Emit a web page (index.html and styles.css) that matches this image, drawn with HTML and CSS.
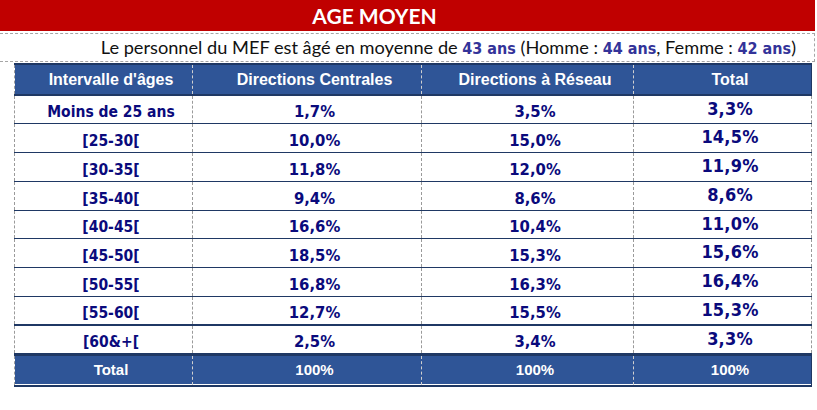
FILE: index.html
```html
<!DOCTYPE html>
<html lang="fr">
<head>
<meta charset="utf-8">
<title>Age moyen</title>
<link rel="stylesheet" href="styles.css">
</head>
<body>
<div class="sheet">
  <div class="title">AGE MOYEN</div>
  <div class="subtitle">Le personnel du MEF est âgé en moyenne de <b>43 ans</b> (Homme : <b>44 ans</b>, Femme : <b>42 ans</b>)</div>
  <table class="ages">
    <colgroup>
      <col class="c1"><col class="c2"><col class="c3"><col class="c4">
    </colgroup>
    <thead>
      <tr><th>Intervalle d'âges</th><th>Directions Centrales</th><th>Directions à Réseau</th><th>Total</th></tr>
    </thead>
    <tbody>
      <tr><td class="lab">Moins de 25 ans</td><td>1,7%</td><td>3,5%</td><td class="tot">3,3%</td></tr>
      <tr><td class="lab">[25-30[</td><td>10,0%</td><td>15,0%</td><td class="tot">14,5%</td></tr>
      <tr><td class="lab">[30-35[</td><td>11,8%</td><td>12,0%</td><td class="tot">11,9%</td></tr>
      <tr><td class="lab">[35-40[</td><td>9,4%</td><td>8,6%</td><td class="tot">8,6%</td></tr>
      <tr><td class="lab">[40-45[</td><td>16,6%</td><td>10,4%</td><td class="tot">11,0%</td></tr>
      <tr><td class="lab">[45-50[</td><td>18,5%</td><td>15,3%</td><td class="tot">15,6%</td></tr>
      <tr><td class="lab">[50-55[</td><td>16,8%</td><td>16,3%</td><td class="tot">16,4%</td></tr>
      <tr class="sep2"><td class="lab">[55-60[</td><td>12,7%</td><td>15,5%</td><td class="tot">15,3%</td></tr>
      <tr class="sep3"><td class="lab">[60&amp;+[</td><td>2,5%</td><td>3,4%</td><td class="tot">3,3%</td></tr>
    </tbody>
    <tfoot>
      <tr><td>Total</td><td>100%</td><td>100%</td><td>100%</td></tr>
    </tfoot>
  </table>
</div>
</body>
</html>
```

FILE: styles.css
```css
html, body {
  margin: 0;
  padding: 0;
  background: #ffffff;
}

.sheet {
  width: 817px;
}

.title {
  width: 815px;
  height: 31px;
  box-sizing: border-box;
  padding-right: 66px;
  background: #c00000;
  color: #ffffff;
  font-family: Lato, "Open Sans", sans-serif;
  font-weight: 700;
  font-size: 21px;
  line-height: 31px;
  text-align: center;
}

.subtitle {
  margin-top: 2px;
  width: 815px;
  height: 29px;
  box-sizing: border-box;
  padding-right: 18px;
  border-top: 1px dashed #a6a6a6;
  border-bottom: 1px dashed #a6a6a6;
  border-right: 1px dashed #a6a6a6;
  font-family: Lato, "Open Sans", sans-serif;
  font-size: 18.2px;
  line-height: 26px;
  color: #111111;
  text-align: right;
  white-space: nowrap;
}

.subtitle b {
  font-family: "DejaVu Sans Condensed", "DejaVu Sans", sans-serif;
  font-stretch: condensed;
  font-weight: 700;
  font-size: 16px;
  color: #333399;
}

.ages {
  margin: 1px 0 0 14px;
  width: 797px;
  border-collapse: collapse;
  table-layout: fixed;
}

.c1 { width: 178px; }
.c2 { width: 229px; }
.c3 { width: 212px; }
.c4 { width: 178px; }

.ages thead tr {
  height: 31px;
}

.ages th {
  padding: 0 0 0 15px;
  background: #2f5597;
  color: #ffffff;
  font-family: "Liberation Sans", Arial, sans-serif;
  font-weight: 700;
  font-size: 16px;
  line-height: 18px;
  text-align: center;
  vertical-align: middle;
  border-top: 2px solid #1f3864;
  border-bottom: 2px solid #1f3864;
  border-left: 1px dashed #d0d0d0;
  border-right: 1px dashed #d0d0d0;
}

.ages th:first-child {
  border-left: 1px dashed #9a9a9a;
}

.ages th:last-child {
  border-right: 1px solid #1f3864;
}

.ages tbody tr {
  height: 28.8px;
}

.ages tbody td {
  padding: 0 0 2px 15px;
  color: #0a0a7c;
  font-family: "DejaVu Sans Condensed", "DejaVu Sans", sans-serif;
  font-stretch: condensed;
  font-weight: 700;
  font-size: 16.5px;
  line-height: 18px;
  text-align: center;
  vertical-align: bottom;
  border-bottom: 1px solid #1f3864;
  border-left: 1px dashed #9a9a9a;
  border-right: 1px dashed #9a9a9a;
}

.ages tbody td.lab {
  font-size: 15.5px;
}

.ages tbody td.tot {
  font-size: 18px;
  padding: 4px 0 0 15px;
  vertical-align: top;
  letter-spacing: 0.2px;
}

.ages tbody tr.sep2 td {
  border-bottom: 2px solid #1f3864;
}

.ages tbody tr.sep3 td {
  border-bottom: 3px solid #1f3864;
}

.ages tfoot tr {
  height: 32px;
}

.ages tfoot td {
  padding: 0 0 1px 15px;
  background: #2f5597;
  color: #ffffff;
  font-family: "Liberation Sans", Arial, sans-serif;
  font-weight: 700;
  font-size: 15px;
  line-height: 18px;
  text-align: center;
  vertical-align: middle;
  border-bottom: 2px solid #1f3864;
  border-left: 1px dashed #d0d0d0;
  border-right: 1px dashed #d0d0d0;
  box-shadow: inset 0 -1px 0 #ffffff;
}

.ages tfoot td:first-child {
  border-left: 1px dashed #9a9a9a;
}

.ages tfoot td:last-child {
  border-right: 1px solid #1f3864;
}
```
